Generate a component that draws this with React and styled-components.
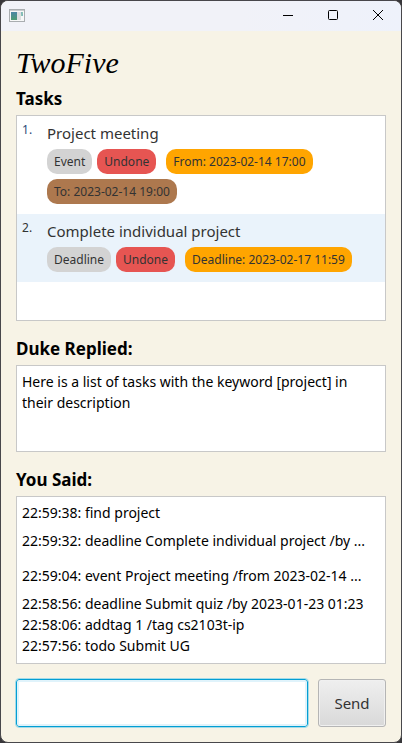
import React, { useState } from "react";
import styled, { createGlobalStyle } from "styled-components";

const GlobalStyle = createGlobalStyle`
  *, *::before, *::after { box-sizing: border-box; }
  body { margin: 0; background: #38373a; }
  body, button, input { font-family: "Segoe UI", "Noto Sans", "Open Sans", sans-serif; }
`;

const Window = styled.div`
  min-height: 100vh;
  display: flex;
  flex-direction: column;
  overflow: hidden;
  border: 1px solid #48474b;
  border-radius: 8px;
  background: #f7f3e6;
`;

const TitleBar = styled.header`
  height: 30px;
  flex: none;
  display: flex;
  align-items: center;
  justify-content: space-between;
  padding-left: 8px;
  background: linear-gradient(90deg, #f1f2f8 60%, #eef2fb);
`;

const WindowControls = styled.div`
  display: flex;
  height: 100%;
  padding-right: 1px;
`;

const ControlButton = styled.button`
  width: 45px;
  height: 28px;
  padding: 0;
  border: 0;
  display: grid;
  place-items: center;
  background: transparent;
  color: #000;
`;

const Content = styled.main`
  flex: 1;
  display: flex;
  flex-direction: column;
  padding: 15px;
`;

const AppName = styled.h1`
  margin: 0 0 6px;
  font: italic 400 30px/34px Gabriola, "Liberation Serif", serif;
  color: #000;
`;

const Section = styled.section`
  flex: ${(p) => p.$grow} 0 auto;
  display: flex;
  flex-direction: column;
  margin-bottom: 15px;
`;

const Heading = styled.h2`
  margin: 0;
  padding-bottom: 4px;
  font-size: 17px;
  line-height: 25px;
  font-weight: 700;
  color: #000;
`;

const TaskList = styled.ol`
  flex: 1;
  min-height: 206px;
  margin: 0;
  padding: 0;
  list-style: none;
  background: #fff;
  border: 1px solid #c8c8c8;
`;

const TaskRow = styled.li`
  display: grid;
  grid-template-columns: 25px 1fr;
  padding: 6px 5px 10px;
  background: ${(p) => (p.$shaded ? "#eaf3fb" : "#fff")};
`;

const TaskNumber = styled.span`
  font-size: 12px;
  line-height: 16px;
  color: ${(p) => (p.$shaded ? "#333" : "#2a4a78")};
`;

const TaskName = styled.div`
  margin-bottom: 5px;
  font-size: 15px;
  line-height: 22px;
  color: #333;
`;

const Tags = styled.div`
  display: flex;
  flex-wrap: wrap;
  gap: 5px;
`;

const tones = {
  kind: "#d3d3d3",
  status: "#e65552",
  start: "#ffa500",
  end: "#ad784e",
};

const Tag = styled.span`
  padding: 0 7px;
  margin-left: ${(p) => (p.$tone === "start" ? "5px" : "0")};
  border-radius: 10px;
  font-size: 12px;
  line-height: 25px;
  white-space: nowrap;
  color: #333;
  background: ${(p) => tones[p.$tone]};
`;

const Reply = styled.p`
  flex: 1;
  min-height: 87px;
  margin: 0;
  padding: 5px;
  font-size: 14px;
  line-height: 21px;
  color: #000;
  background: #fff;
  border: 1px solid #c8c8c8;
`;

const History = styled.ul`
  flex: 1;
  min-height: 168px;
  margin: 0;
  padding: 5px;
  list-style: none;
  background: #fff;
  border: 1px solid #c8c8c8;
`;

const HistoryLine = styled.li`
  overflow: hidden;
  font-size: 14px;
  line-height: ${(p) => (p.$tall ? "35px" : "21px")};
  white-space: nowrap;
  text-overflow: ellipsis;
  color: #000;
`;

const Composer = styled.form`
  display: flex;
  gap: 10px;
`;

const CommandInput = styled.input`
  flex: 1;
  min-width: 0;
  height: 48px;
  padding: 0 10px;
  font-size: 15px;
  background: #fff;
  border: 1px solid #039ed3;
  border-radius: 3px;
  outline: 1px solid #a5dbe8;
  box-shadow: inset 0 0 0 2px #e0f3fb;
`;

const SendButton = styled.button`
  width: 68px;
  height: 48px;
  padding: 0;
  font-size: 15px;
  color: #333;
  background: linear-gradient(#efefef, #d9d9d9);
  border: 1px solid #b5b5b5;
  border-radius: 3px;
  box-shadow: inset 0 0 0 1px #f0f0f0;
`;

const tasks = [
  {
    name: "Project meeting",
    tags: [
      ["kind", "Event"],
      ["status", "Undone"],
      ["start", "From: 2023-02-14 17:00"],
      ["end", "To: 2023-02-14 19:00"],
    ],
  },
  {
    name: "Complete individual project",
    tags: [
      ["kind", "Deadline"],
      ["status", "Undone"],
      ["start", "Deadline: 2023-02-17 11:59"],
    ],
  },
];

const history = [
  { text: "22:59:38: find project" },
  { text: "22:59:32: deadline Complete individual project /by ...", tall: true },
  { text: "22:59:04: event Project meeting /from 2023-02-14 ...", tall: true },
  { text: "22:58:56: deadline Submit quiz /by 2023-01-23 01:23" },
  { text: "22:58:06: addtag 1 /tag cs2103t-ip" },
  { text: "22:57:56: todo Submit UG" },
];

function AppIcon() {
  return (
    <svg width="16" height="14" viewBox="0 0 16 14" aria-hidden="true">
      <defs>
        <linearGradient id="pane" x1="0" y1="0" x2="0" y2="1">
          <stop offset="0" stopColor="#4b87a5" />
          <stop offset="1" stopColor="#4d9c72" />
        </linearGradient>
      </defs>
      <rect x="0.5" y="0.5" width="15" height="12" fill="#f7f8f8" stroke="#a9adb0" />
      <path d="M1 1.5H15" stroke="#c8cccd" />
      <rect x="2" y="3" width="6" height="8" fill="url(#pane)" />
      <rect x="8" y="3" width="4" height="8" fill="#dcdfe0" />
      <rect x="12" y="3" width="2" height="4" fill="#8cc8ae" />
      <path d="M12 4h1M13 6h1" stroke="#769ed6" />
    </svg>
  );
}

export default function App() {
  const [command, setCommand] = useState("");
  return (
    <>
      <GlobalStyle />
      <Window>
        <TitleBar>
          <AppIcon />
          <WindowControls>
            <ControlButton aria-label="Minimize">
              <svg width="10" height="10" stroke="currentColor"><path d="M0 5.5H10" /></svg>
            </ControlButton>
            <ControlButton aria-label="Maximize">
              <svg width="10" height="10" fill="none" stroke="currentColor"><rect x="0.5" y="0.5" width="9" height="9" rx="1" /></svg>
            </ControlButton>
            <ControlButton aria-label="Close">
              <svg width="10" height="10" stroke="currentColor"><path d="M0 0L10 10M10 0L0 10" /></svg>
            </ControlButton>
          </WindowControls>
        </TitleBar>
        <Content>
          <AppName>TwoFive</AppName>
          <Section $grow={2}>
            <Heading>Tasks</Heading>
            <TaskList>
              {tasks.map((task, i) => (
                <TaskRow key={task.name} $shaded={i % 2 === 1}>
                  <TaskNumber $shaded={i % 2 === 1}>{i + 1}.</TaskNumber>
                  <div>
                    <TaskName>{task.name}</TaskName>
                    <Tags>
                      {task.tags.map(([tone, label]) => (
                        <Tag key={label} $tone={tone}>{label}</Tag>
                      ))}
                    </Tags>
                  </div>
                </TaskRow>
              ))}
            </TaskList>
          </Section>
          <Section $grow={1}>
            <Heading>Duke Replied:</Heading>
            <Reply>Here is a list of tasks with the keyword [project] in their description</Reply>
          </Section>
          <Section $grow={2}>
            <Heading>You Said:</Heading>
            <History>
              {history.map((line) => (
                <HistoryLine key={line.text} $tall={line.tall}>{line.text}</HistoryLine>
              ))}
            </History>
          </Section>
          <Composer onSubmit={(e) => e.preventDefault()}>
            <CommandInput
              aria-label="Command"
              value={command}
              onChange={(e) => setCommand(e.target.value)}
            />
            <SendButton type="submit">Send</SendButton>
          </Composer>
        </Content>
      </Window>
    </>
  );
}
